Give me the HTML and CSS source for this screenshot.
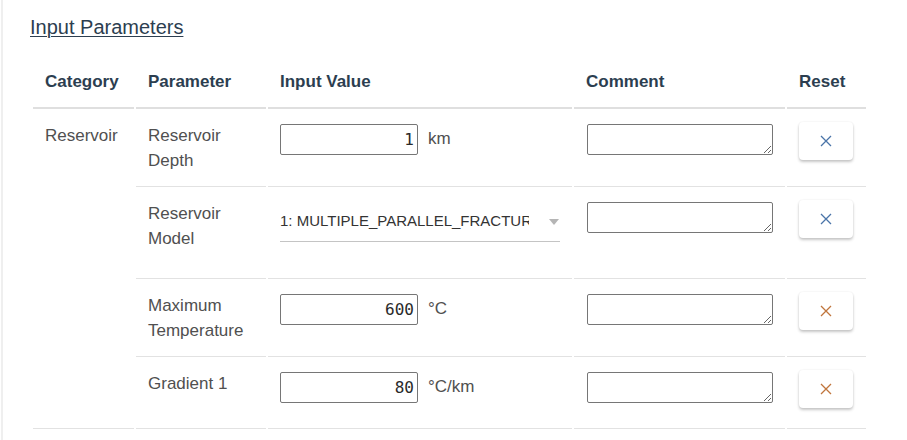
FILE: index.html
```html
<!DOCTYPE html>
<html>
<head>
<meta charset="utf-8">
<link rel="stylesheet" href="styles.css">
</head>
<body>
<div class="panel">
  <div class="title">Input Parameters</div>
  <table class="params">
    <thead>
      <tr>
        <th class="c-cat">Category</th>
        <th class="c-param">Parameter</th>
        <th class="c-input">Input Value</th>
        <th class="c-comment">Comment</th>
        <th class="c-reset">Reset</th>
      </tr>
    </thead>
    <tbody>
      <tr>
        <td rowspan="4">Reservoir</td>
        <td>Reservoir Depth</td>
        <td><div class="value"><input class="num" type="text" value="1"><span class="unit">km</span></div></td>
        <td><textarea class="comment"></textarea></td>
        <td><button class="reset-btn blue"><svg width="12" height="12" viewBox="0 0 12 12"><path d="M1 1L11 11M11 1L1 11" stroke="currentColor" stroke-width="1.3" fill="none"/></svg></button></td>
      </tr>
      <tr>
        <td>Reservoir Model</td>
        <td>
          <div class="select-wrap">
            <div class="select"><span class="sel-text">1: MULTIPLE_PARALLEL_FRACTURES</span><span class="arrow"></span></div>
          </div>
        </td>
        <td><textarea class="comment"></textarea></td>
        <td><button class="reset-btn blue"><svg width="12" height="12" viewBox="0 0 12 12"><path d="M1 1L11 11M11 1L1 11" stroke="currentColor" stroke-width="1.3" fill="none"/></svg></button></td>
      </tr>
      <tr>
        <td>Maximum Temperature</td>
        <td><div class="value"><input class="num" type="text" value="600"><span class="unit">°C</span></div></td>
        <td><textarea class="comment"></textarea></td>
        <td><button class="reset-btn orange"><svg width="12" height="12" viewBox="0 0 12 12"><path d="M1 1L11 11M11 1L1 11" stroke="currentColor" stroke-width="1.3" fill="none"/></svg></button></td>
      </tr>
      <tr>
        <td>Gradient 1</td>
        <td><div class="value"><input class="num" type="text" value="80"><span class="unit">°C/km</span></div></td>
        <td><textarea class="comment"></textarea></td>
        <td><button class="reset-btn orange"><svg width="12" height="12" viewBox="0 0 12 12"><path d="M1 1L11 11M11 1L1 11" stroke="currentColor" stroke-width="1.3" fill="none"/></svg></button></td>
      </tr>
    </tbody>
  </table>
</div>
</body>
</html>
```
FILE: styles.css
```css
html, body {
  margin: 0;
  padding: 0;
  background: #fff;
  height: 100%;
}
body {
  padding-left: 1px;
  font-family: "Liberation Sans", Arial, sans-serif;
  color: #505050;
}
.panel {
  border-left: 2px solid #efefef;
  min-height: 100%;
  box-sizing: border-box;
  padding: 14px 0 0 27px;
}
.title {
  font-size: 20px;
  line-height: 24px;
  color: #2c3e50;
  text-decoration: underline;
  text-underline-offset: 2px;
  text-decoration-thickness: 1px;
  display: inline-block;
  margin-top: 1px;
}
.params {
  margin-top: 16px;
  margin-left: 1px;
  border-collapse: separate;
  border-spacing: 2px;
  table-layout: fixed;
  width: 837px;
  font-size: 17px;
  line-height: 25.5px;
}
.params th {
  box-sizing: border-box;
  text-align: left;
  font-weight: bold;
  color: #2c3e50;
  padding: 12px;
  border-bottom: 2px solid #dfdfdf;
}
.c-cat { width: 101px; }
.c-param { width: 130px; }
.c-input { width: 304px; }
.c-comment { width: 211px; }
.c-reset { width: 79px; }
.params td {
  padding: 12px;
  vertical-align: top;
  border-bottom: 1px solid #e2e2e2;
  color: #505050;
}
.value {
  display: flex;
  align-items: center;
  gap: 10px;
  margin-top: 1px;
}
.num {
  box-sizing: border-box;
  width: 138px;
  height: 31px;
  margin: 0;
  border: 1px solid #767676;
  border-radius: 2px;
  padding: 0 3px 0 4px;
  text-align: right;
  font-family: "DejaVu Sans Mono", monospace;
  font-size: 16px;
  color: #2a2a2a;
  background: #fff;
}
.unit {
  color: #505050;
  font-size: 17px;
}
.comment {
  display: block;
  box-sizing: border-box;
  width: 186px;
  height: 31px;
  margin: 1px 0 0 1px;
  border: 1px solid #767676;
  border-radius: 2px;
  padding: 2px;
  font-family: "Liberation Sans", Arial, sans-serif;
  font-size: 13px;
  background: #fff;
}
.reset-btn {
  display: flex;
  align-items: center;
  justify-content: center;
  box-sizing: border-box;
  width: 54px;
  height: 38px;
  margin: -1px 0 8px 0;
  padding: 0;
  border: none;
  border-radius: 4px;
  background: #fff;
  box-shadow: 0 2px 3px rgba(0, 0, 0, 0.22), 0 0 2px rgba(0, 0, 0, 0.08);
}
.reset-btn svg { display: block; }
.blue { color: #4a74a8; }
.orange { color: #c0753c; }
.select-wrap {
  height: 65px;
}
.select {
  display: flex;
  align-items: center;
  width: 280px;
  height: 40px;
  border-bottom: 1px solid #c4c4c4;
}
.sel-text {
  width: 249px;
  overflow: hidden;
  white-space: nowrap;
  font-size: 15px;
  color: #333;
}
.arrow {
  margin-left: auto;
  margin-right: 1px;
  margin-top: 2px;
  width: 0;
  height: 0;
  border-left: 5px solid transparent;
  border-right: 5px solid transparent;
  border-top: 6px solid #b5b5b5;
}
```
